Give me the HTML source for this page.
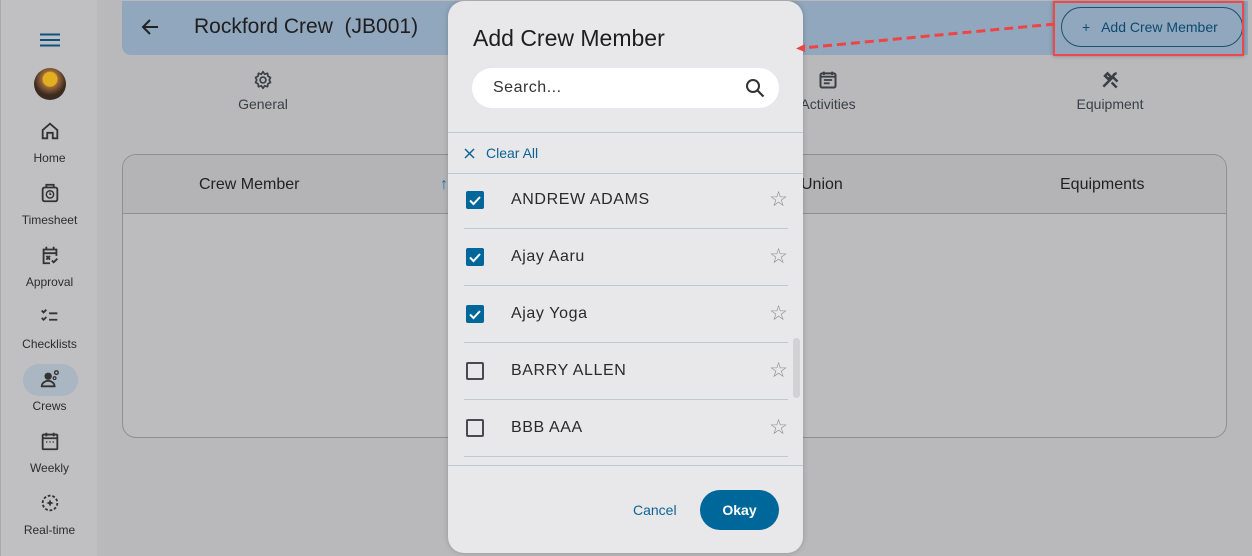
<!DOCTYPE html>
<html><head><style>
*{box-sizing:border-box;margin:0;padding:0}
body{width:1252px;height:556px;overflow:hidden;font-family:"Liberation Sans",sans-serif;background:#b9b9bb;position:relative;color:#222}
.sb{position:absolute;left:0;top:0;width:97px;height:556px;background:#c0c0c2;border-left:1px solid #a8a8a8}
.ni{position:absolute;left:0;width:97px;text-align:center;font-size:12px;line-height:14px;color:#2c2c2e}
.ni svg{display:block;margin:0 auto 9px}
.hdr{position:absolute;left:122px;top:1px;width:1126px;height:54px;background:#91a7bd;border-radius:0 0 0 9px}
.tab{position:absolute;text-align:center;font-size:14px;color:#3a3f45;width:120px}
.tbl{position:absolute;left:122px;top:154px;width:1105px;height:284px;border:1px solid #8f8f91;border-radius:14px;overflow:hidden;background:#bcbcbe}
.th{height:59px;background:#b4b4b6;border-bottom:1px solid #8f8f91;position:relative;font-size:16px;color:#222}
.th span{position:absolute;top:21px}
.dlg{position:absolute;left:448px;top:1px;width:355px;height:552px;background:#e8e8ea;border-radius:16px;box-shadow:0 0 6px rgba(0,0,0,.2)}
.row{position:absolute;left:16px;width:324px;height:57px;border-bottom:1px solid #c3c8d0}
.cb{position:absolute;left:2px;top:19px;width:18px;height:18px;border-radius:2px}
.on{background:#00679a}
.off{border:2px solid #4a4a4e}
.nm{position:absolute;left:47px;top:19px;font-size:16px;letter-spacing:.6px;color:#2a2a2c}
.st{position:absolute;right:0;top:17px;font-size:21px;color:#8a8a8c;line-height:22px}
</style></head><body>
<div class="sb">
 <svg style="position:absolute;left:39px;top:33px" width="20" height="14"><path d="M0 1.5h20M0 7h20M0 12.5h20" stroke="#0d5580" stroke-width="2"/></svg>
 <div style="position:absolute;left:33px;top:68px;width:32px;height:32px;border-radius:50%;background:radial-gradient(circle at 50% 35%,#e0b020 0 7px,#a06a3a 8px,#3a2a20 16px)"></div>
 <div class="ni" style="top:120px"><svg width="22" height="22" viewBox="0 0 24 24"><path d="M4 11L12 4l8 7v9h-5v-6H9v6H4z" fill="none" stroke="#333" stroke-width="2"/></svg>Home</div>
 <div class="ni" style="top:182px"><svg width="22" height="22" viewBox="0 0 24 24"><rect x="4" y="6" width="16" height="15" rx="2" fill="none" stroke="#333" stroke-width="2"/><path d="M8 6V3h8v3" fill="none" stroke="#333" stroke-width="2"/><circle cx="12" cy="13.5" r="4" fill="none" stroke="#333" stroke-width="1.6"/><path d="M12 11.5v2h1.5" stroke="#333" stroke-width="1.4" fill="none"/></svg>Timesheet</div>
 <div class="ni" style="top:244px"><svg width="22" height="22" viewBox="0 0 24 24"><path d="M12 21H5V6h14v7M5 10h14M8 3v4M16 3v4M8 13l4 4M12 13l-4 4M14 18l2 2 4-4" fill="none" stroke="#333" stroke-width="2"/></svg>Approval</div>
 <div class="ni" style="top:306px"><svg width="22" height="22" viewBox="0 0 24 24"><path d="M3 5l2 2 3-3M3 13l2 2 3-3M11 8h9M11 15h9" fill="none" stroke="#333" stroke-width="2"/></svg>Checklists</div>
 <div style="position:absolute;left:22px;top:364px;width:55px;height:32px;border-radius:16px;background:#abb6c3"></div>
 <div class="ni" style="top:368px"><svg width="24" height="22" viewBox="0 0 24 24"><circle cx="10" cy="9" r="4" fill="#333"/><path d="M3 20c0-4 4-6 7-6s7 2 7 6z" fill="none" stroke="#333" stroke-width="2"/><circle cx="19" cy="5" r="2" fill="none" stroke="#333" stroke-width="1.5"/><circle cx="17" cy="11" r="1.5" fill="none" stroke="#333" stroke-width="1.3"/></svg>Crews</div>
 <div class="ni" style="top:430px"><svg width="22" height="22" viewBox="0 0 24 24"><rect x="4" y="5" width="16" height="16" rx="1" fill="none" stroke="#333" stroke-width="2"/><path d="M4 9h16M8 3v4M16 3v4M8 13h1M11.5 13h1M15 13h1" stroke="#333" stroke-width="2"/></svg>Weekly</div>
 <div class="ni" style="top:492px"><svg width="24" height="22" viewBox="0 0 24 24"><circle cx="12" cy="12" r="8" fill="none" stroke="#333" stroke-width="2" stroke-dasharray="3 2"/><path d="M12 8l1.2 2.8L16 12l-2.8 1.2L12 16l-1.2-2.8L8 12l2.8-1.2z" fill="#333"/></svg>Real-time</div>
</div>
<div class="hdr">
 <svg style="position:absolute;left:19px;top:17px" width="18" height="18" viewBox="0 0 18 18"><path d="M17 9H2M9 2L2 9l7 7" fill="none" stroke="#222" stroke-width="2"/></svg>
 <div style="position:absolute;left:72px;top:14px;font-size:21px;color:#1e1e20">Rockford Crew&nbsp; (JB001)</div>
 <div style="position:absolute;left:939px;top:6px;width:182px;height:40px;border:1px solid #1f4e6e;border-radius:20px;color:#0d4a70;font-size:14px;padding:11px 0 0 20px">+&nbsp;&nbsp; Add Crew Member</div>
</div>
<div style="position:absolute;left:1053px;top:1px;width:191px;height:55px;border:2px solid #f04848;box-shadow:0 0 4px rgba(0,0,0,.3)"></div>
<div class="tab" style="left:203px;top:70px"><svg width="20" height="20" viewBox="0 0 24 24" style="display:block;margin:0 auto 6px"><circle cx="12" cy="12" r="3.5" fill="none" stroke="#3a3f45" stroke-width="2"/><path d="M12 2l2 3 3.5-1 .5 3.5 3 1.5-1.5 3 1.5 3-3 1.5-.5 3.5-3.5-1-2 3-2-3-3.5 1-.5-3.5-3-1.5 1.5-3-1.5-3 3-1.5.5-3.5 3.5 1z" fill="none" stroke="#3a3f45" stroke-width="2" stroke-linejoin="round"/></svg>General</div>
<div class="tab" style="left:768px;top:70px"><svg width="20" height="20" viewBox="0 0 24 24" style="display:block;margin:0 auto 6px"><rect x="3" y="4" width="18" height="17" rx="2" fill="none" stroke="#3a3f45" stroke-width="2.4"/><path d="M3 8h18M7 2v4M17 2v4M7 12h10M7 16h7" stroke="#3a3f45" stroke-width="2.2"/></svg>Activities</div>
<div class="tab" style="left:1050px;top:70px"><svg width="20" height="20" viewBox="0 0 24 24" style="display:block;margin:0 auto 6px"><path d="M4 20L15 9M9 4l4 4-3 3-4-4zM14 15l6 6M20 4c-2 0-5 2-4 5l5 5" fill="none" stroke="#3a3f45" stroke-width="3"/></svg>Equipment</div>
<div class="tbl"><div class="th"><span style="left:76px">Crew Member</span><span style="left:317px;color:#1a6fb0">↑</span><span style="left:678px">Union</span><span style="left:937px">Equipments</span></div></div>
<div class="dlg">
 <div style="position:absolute;left:25px;top:24px;font-size:23px;color:#1e1e20">Add Crew Member</div>
 <div style="position:absolute;left:24px;top:67px;width:307px;height:40px;background:#fff;border-radius:20px;font-size:16px;color:#333;padding:11px 0 0 21px;letter-spacing:.5px">Search...
  <svg style="position:absolute;right:14px;top:10px" width="20" height="20" viewBox="0 0 20 20"><circle cx="8" cy="8" r="6" fill="none" stroke="#333" stroke-width="2"/><path d="M12.5 12.5l6 6" stroke="#333" stroke-width="2.2"/></svg></div>
 <div style="position:absolute;left:0;top:131px;width:355px;border-top:1px solid #c3c8d0"></div>
 <svg style="position:absolute;left:16px;top:147px" width="11" height="11"><path d="M1 1l9 9M10 1l-9 9" stroke="#0d6494" stroke-width="1.5"/></svg>
 <div style="position:absolute;left:38px;top:144px;font-size:14px;color:#0d6494">Clear All</div>
 <div style="position:absolute;left:0;top:172px;width:355px;border-top:1px solid #c3c8d0"></div>
 <div class="row" style="top:171px"><div class="cb on"><svg width="18" height="18"><path d="M4 9.5l3.5 3.5L14 6" stroke="#fff" stroke-width="2" fill="none"/></svg></div><div class="nm">ANDREW ADAMS</div><div class="st">☆</div></div>
 <div class="row" style="top:228px"><div class="cb on"><svg width="18" height="18"><path d="M4 9.5l3.5 3.5L14 6" stroke="#fff" stroke-width="2" fill="none"/></svg></div><div class="nm">Ajay Aaru</div><div class="st">☆</div></div>
 <div class="row" style="top:285px"><div class="cb on"><svg width="18" height="18"><path d="M4 9.5l3.5 3.5L14 6" stroke="#fff" stroke-width="2" fill="none"/></svg></div><div class="nm">Ajay Yoga</div><div class="st">☆</div></div>
 <div class="row" style="top:342px"><div class="cb off"></div><div class="nm">BARRY ALLEN</div><div class="st">☆</div></div>
 <div class="row" style="top:399px"><div class="cb off"></div><div class="nm">BBB AAA</div><div class="st">☆</div></div>
 <div style="position:absolute;left:345px;top:337px;width:7px;height:60px;border-radius:4px;background:#d2d2d4"></div>
 <div style="position:absolute;left:0;top:464px;width:355px;border-top:1px solid #c3c8d0"></div>
 <div style="position:absolute;left:185px;top:501px;font-size:14px;color:#0d6494">Cancel</div>
 <div style="position:absolute;left:252px;top:489px;width:79px;height:40px;border-radius:20px;background:#00679a;color:#fff;font-weight:bold;font-size:14px;text-align:center;line-height:40px">Okay</div>
</div>
<svg style="position:absolute;left:790px;top:20px" width="270" height="36"><path d="M265 4L12 28" stroke="#ee4444" stroke-width="3" stroke-dasharray="9 5"/><path d="M6 28.5l9-4.5v8z" fill="#ee4444"/></svg>
</body></html>
